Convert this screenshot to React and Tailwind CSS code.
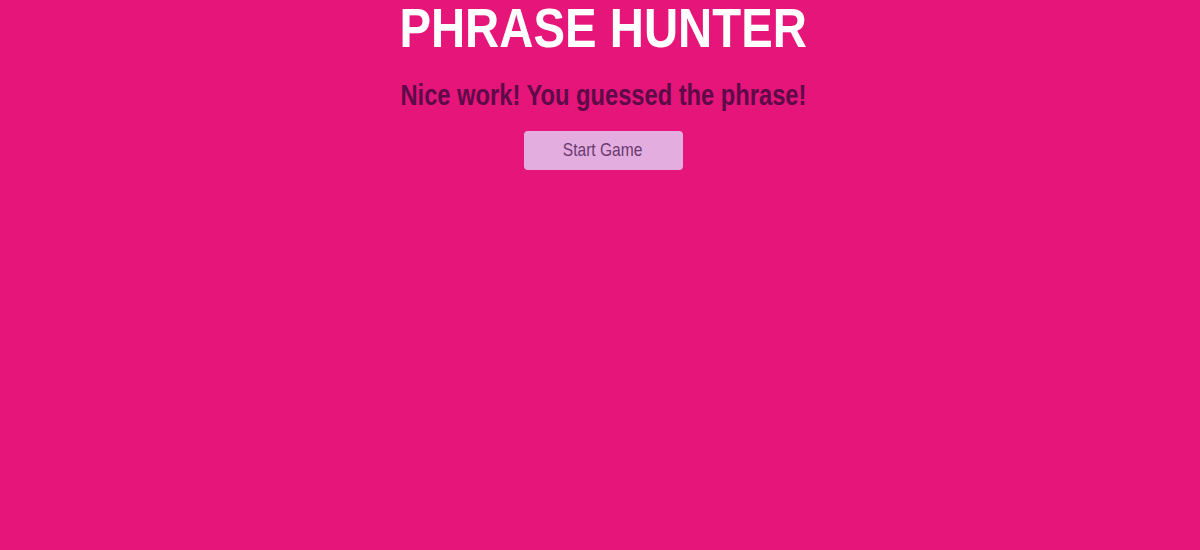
export default function App() {
  return (
    <div className="min-h-[550px] bg-[#e6157a] pl-[6px] text-center" style={{ fontFamily: '"Liberation Sans", Arial, sans-serif' }}>
      <h1 className="pt-[2px] text-[56px] font-bold leading-[52px] text-white">
        <span className="inline-block scale-x-[0.845]">PHRASE HUNTER</span>
      </h1>
      <h2 className="mt-[23px] text-[29px] font-bold leading-[36px] text-[#5c0a48]">
        <span className="inline-block scale-x-[0.817]">Nice work! You guessed the phrase!</span>
      </h2>
      <button className="mt-[18px] h-[39px] w-[159px] rounded-[4px] bg-[#e3aedf] text-[19px] text-[#6a3a70]">
        <span className="inline-block scale-x-[0.82]">Start Game</span>
      </button>
    </div>
  );
}
